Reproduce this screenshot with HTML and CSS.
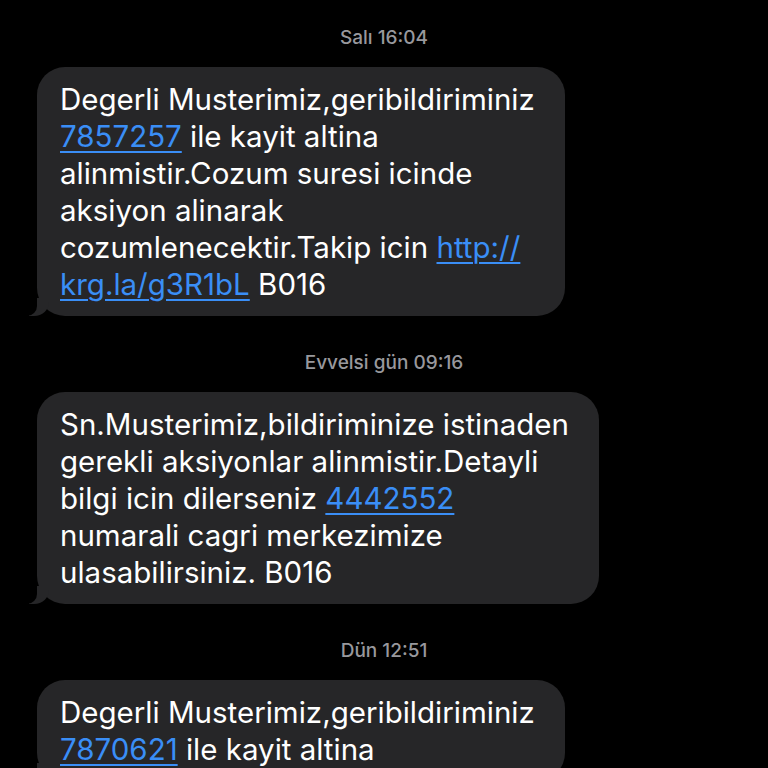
FILE: index.html
```html
<!DOCTYPE html>
<html lang="tr">
<head>
    <meta charset="UTF-8">
    <meta name="viewport" content="width=device-width, initial-scale=1.0">
    <title>Mesajlar</title>
    <link rel="stylesheet" href="styles.css">
</head>
<body>
    <div class="thread">
        <div class="stamp">Salı 16:04</div>
        <div class="bubble">
            Degerli Musterimiz,geribildiriminiz<br>
            <a href="#">7857257</a> ile kayit altina<br>
            alinmistir.Cozum suresi icinde<br>
            aksiyon alinarak<br>
            cozumlenecektir.Takip icin <a href="#">http://<br>krg.la/g3R1bL</a> B016
        </div>

        <div class="stamp">Evvelsi gün 09:16</div>
        <div class="bubble">
            Sn.Musterimiz,bildiriminize istinaden<br>
            gerekli aksiyonlar alinmistir.Detayli<br>
            bilgi icin dilerseniz <a href="#">4442552</a><br>
            numarali cagri merkezimize<br>
            ulasabilirsiniz. B016
        </div>

        <div class="stamp">Dün 12:51</div>
        <div class="bubble">
            Degerli Musterimiz,geribildiriminiz<br>
            <a href="#">7870621</a> ile kayit altina
        </div>
    </div>
</body>
</html>
```

FILE: styles.css
```css
body {
    margin: 0;
    background: #000;
    font-family: 'Inter', 'Noto Sans', sans-serif;
    overflow: hidden;
}
.thread {
    display: flex;
    flex-direction: column;
    align-items: flex-start;
    padding: 27px 0 0 37px;
}
.stamp {
    align-self: stretch;
    margin-left: -37px;
    text-align: center;
    color: #98989d;
    font-size: 19px;
    font-weight: 500;
    line-height: 22px;
    margin-bottom: 18px;
}
.bubble {
    position: relative;
    background: #262628;
    color: #fff;
    font-size: 29.5px;
    line-height: 37px;
    padding: 14px 30px 13px 23px;
    border-radius: 28px;
    white-space: nowrap;
    margin-bottom: 36px;
}
.bubble a {
    color: #3a8ef6;
    text-decoration: underline;
    text-decoration-thickness: 2px;
    text-underline-offset: 4px;
}
/* tail */
.bubble::before {
    content: "";
    position: absolute;
    left: -8px;
    bottom: 0;
    width: 20px;
    height: 18px;
    background: #262628;
    border-bottom-right-radius: 15px 14px;
}
.bubble::after {
    content: "";
    position: absolute;
    left: -10px;
    bottom: 0;
    width: 10px;
    height: 18px;
    background: #000;
    border-bottom-right-radius: 10px;
}
```
